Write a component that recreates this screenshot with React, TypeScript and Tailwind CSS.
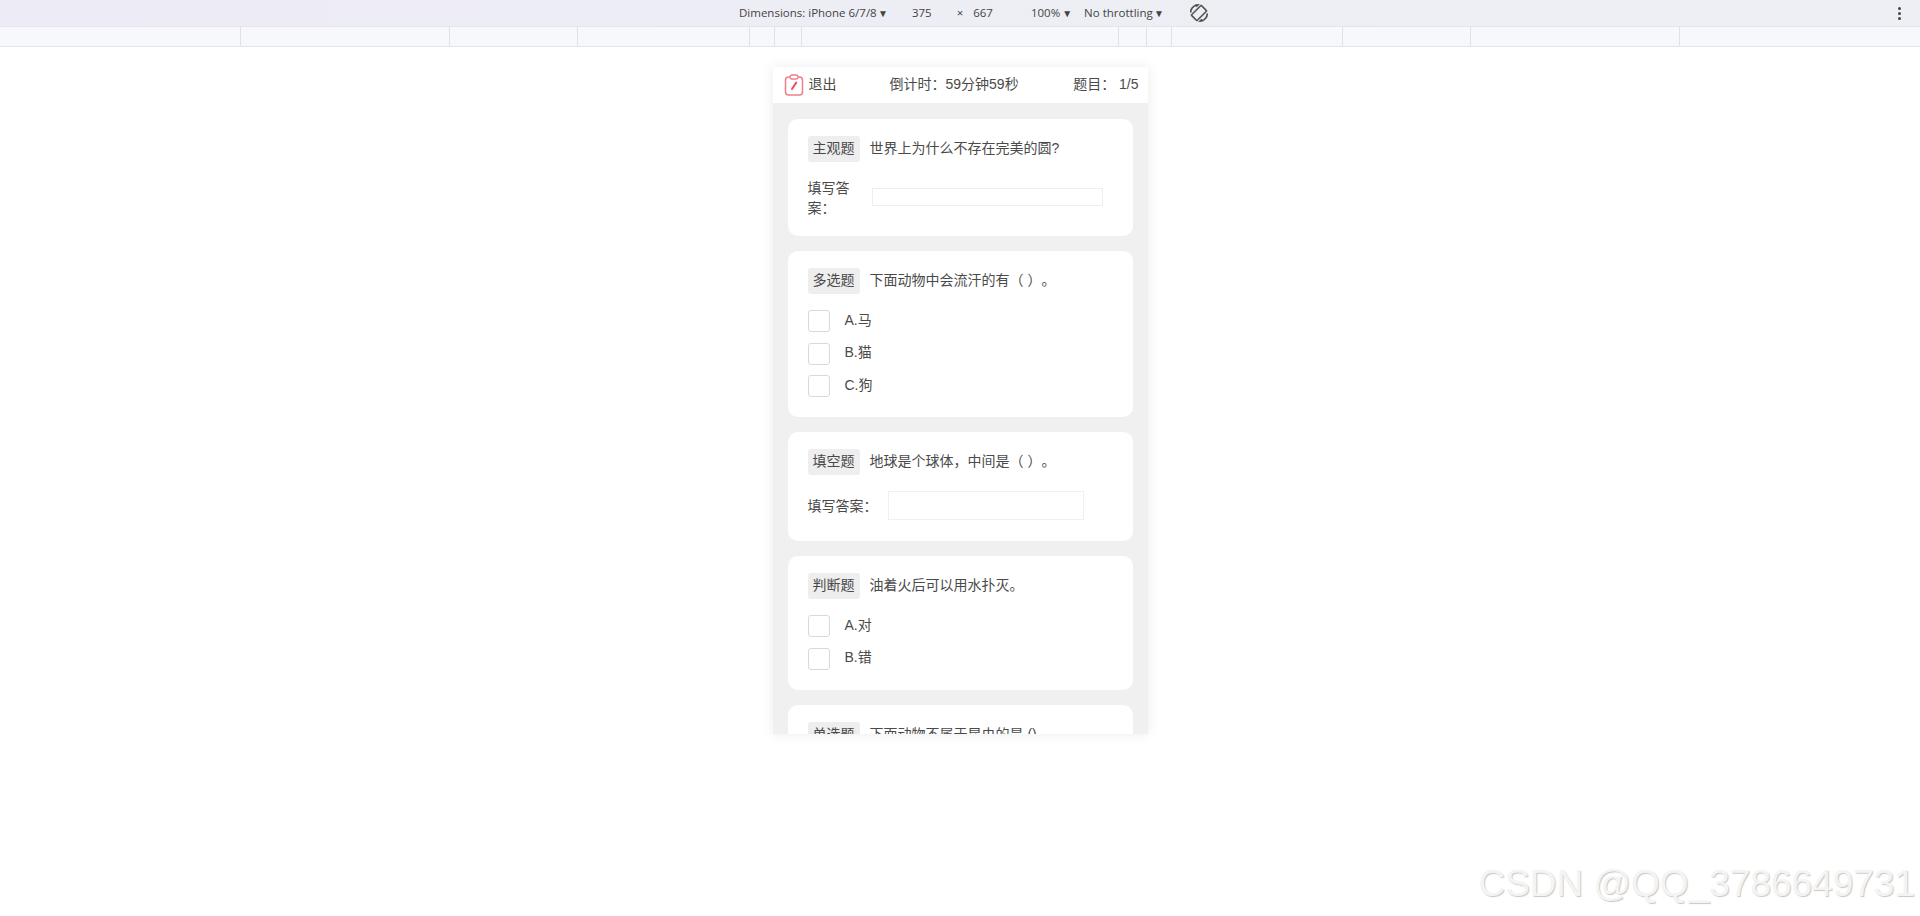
const rulerStops = [241, 209, 128, 172, 25, 27, 317, 28, 25, 171, 128, 209, 240]

function Badge({ children }: { children: string }) {
  return (
    <span className="flex h-[26px] w-[52px] shrink-0 items-center justify-center rounded-[3px] bg-[#eeeeee] pb-[1px] text-[14px]">
      {children}
    </span>
  )
}

function Card({ tag, title, children }: { tag: string; title: string; children?: React.ReactNode }) {
  return (
    <section className="mb-[15px] shrink-0 rounded-[10px] bg-white px-[20px] pt-[17px]">
      <div className="flex items-center gap-[10px]">
        <Badge>{tag}</Badge>
        <p className="pb-[1px] text-[14px] [text-spacing-trim:space-all]">{title}</p>
      </div>
      {children}
    </section>
  )
}

function Options({ items }: { items: string[] }) {
  return (
    <div className="mt-[16px] flex flex-col gap-[10.5px] pb-[20px]">
      {items.map((item) => (
        <label key={item} className="flex h-[22px] items-center">
          <span className="h-[22px] w-[22px] rounded-[3px] border border-[#d9d9d9] bg-white" />
          <span className="mb-[2px] ml-[15px] text-[14px]">{item}</span>
        </label>
      ))}
    </div>
  )
}

function ClipIcon() {
  return (
    <svg width="20" height="22" viewBox="0 0 20 22" fill="none" className="shrink-0">
      <rect x="1.5" y="3" width="17" height="18" rx="3" stroke="#ee7f88" strokeWidth="1.5" />
      <path d="M6 3.6 C6 1.8 7 1 8 1 H12 C13 1 14 1.8 14 3.6 C14 4.6 13.4 5 12.6 5 H7.4 C6.6 5 6 4.6 6 3.6 Z" fill="#fff" stroke="#ee7f88" strokeWidth="1.3" />
      <path d="M12.2 8.6 L8 15" stroke="#e8505f" strokeWidth="2" strokeLinecap="round" />
    </svg>
  )
}

// mirrored screen rotation glyph, same lean as the devtools one
function RotateIcon() {
  return (
    <svg width="18" height="18" viewBox="0 0 24 24" fill="#4a4a4a" stroke="#4a4a4a" strokeWidth="0.7" className="shrink-0">
      <path
        transform="translate(24 0) scale(-1 1)"
        d="M16.48 2.52c3.27 1.55 5.61 4.72 5.97 8.48h1.5C23.44 4.84 18.29 0 12 0l-.66.03 3.81 3.81 1.33-1.32zm-6.25-.77c-.59-.59-1.54-.59-2.12 0L1.75 8.11c-.59.59-.59 1.54 0 2.12l12.02 12.02c.59.59 1.54.59 2.12 0l6.36-6.36c.59-.59.59-1.54 0-2.12L10.23 1.75zm4.6 19.44L2.81 9.17l6.36-6.36 12.02 12.02-6.36 6.36zm-7.31.29C4.25 19.94 1.91 16.76 1.55 13H.05C.56 19.16 5.71 24 12 24l.66-.03-3.81-3.81-1.33 1.32z"
      />
    </svg>
  )
}

export default function App() {
  return (
    <div className="relative flex h-[916px] w-full flex-col overflow-hidden bg-white font-['Liberation_Sans','Noto_Sans_CJK_SC',sans-serif] text-[#4a4a4a]">
      <div className="flex h-[26px] items-center bg-gradient-to-r from-[#edecf6] to-[#eeeff4] font-['Open_Sans',sans-serif] text-[11.5px] text-[#444]">
        <span className="ml-[739px] w-[136px] whitespace-nowrap">Dimensions: iPhone 6/7/8</span>
        <span className="ml-[3px] text-[10px]">▼</span>
        <span className="ml-[24px]">375</span>
        <span className="ml-[25px]">×</span>
        <span className="ml-[10px]">667</span>
        <span className="ml-[38px]">100%</span>
        <span className="ml-[2px] text-[10px]">▼</span>
        <span className="ml-[12px] w-[68px] whitespace-nowrap">No throttling</span>
        <span className="ml-[2px] text-[10px]">▼</span>
        <span className="ml-[26px]"><RotateIcon /></span>
        <span className="ml-auto mr-[19px] flex flex-col gap-[2px]">
          <i className="h-[3px] w-[3px] rounded-full bg-[#444]" />
          <i className="h-[3px] w-[3px] rounded-full bg-[#444]" />
          <i className="h-[3px] w-[3px] rounded-full bg-[#444]" />
        </span>
      </div>

      <div className="flex h-[21px] border-y border-[#e3e5ee] bg-[#f6f8fc]">
        {rulerStops.map((width, i) => (
          <div
            key={i}
            className="shrink-0 border-r border-[#dfe2ec] last:border-r-0"
            style={{ width }}
          />
        ))}
      </div>

      <div className="mx-auto mt-[20px] flex h-[667px] w-[375px] flex-col overflow-hidden bg-[#f0f0f0] shadow-[0_0_12px_rgba(0,0,0,0.08)]">
        <header className="flex h-[36px] shrink-0 items-center bg-white pl-[11px] pr-[9px] text-[14px]">
          <div className="flex w-[106px] items-center gap-[5px]">
            <ClipIcon />
            <span className="pb-[2px]">退出</span>
          </div>
          <span className="pb-[2px]">倒计时：59分钟59秒</span>
          <span className="ml-auto whitespace-pre pb-[2px]">题目： 1/5</span>
        </header>

        <main className="flex flex-col overflow-hidden px-[15px] pt-[16px]">
          <Card tag="主观题" title="世界上为什么不存在完美的圆?">
            <div className="mt-[16px] flex items-start pb-[18px]">
              <span className="w-[50px] text-[14px] leading-[20px]">填写答案：</span>
              <input className="ml-[14px] mt-[10px] h-[18px] w-[231px] border border-[#eeeeee] outline-none" />
            </div>
          </Card>
          <Card tag="多选题" title="下面动物中会流汗的有（ ）。">
            <Options items={['A.马', 'B.猫', 'C.狗']} />
          </Card>
          <Card tag="填空题" title="地球是个球体，中间是（ ）。">
            <div className="mt-[16px] flex items-center pb-[21px]">
              <span className="pt-[2px] text-[14px]">填写答案：</span>
              <input className="ml-[10px] h-[29px] w-[196px] border border-[#f0f0f0] outline-none" />
            </div>
          </Card>
          <Card tag="判断题" title="油着火后可以用水扑灭。">
            <Options items={['A.对', 'B.错']} />
          </Card>
          <Card tag="单选题" title="下面动物不属于昆虫的是 ()" />
        </main>
      </div>

      <div className="absolute right-[5px] top-[864px] whitespace-nowrap text-[37px] leading-[40px] text-[#f4f4f4] [text-shadow:1px_1px_1px_#c8c8c8]">
        CSDN @QQ_3786649731
      </div>
    </div>
  )
}
